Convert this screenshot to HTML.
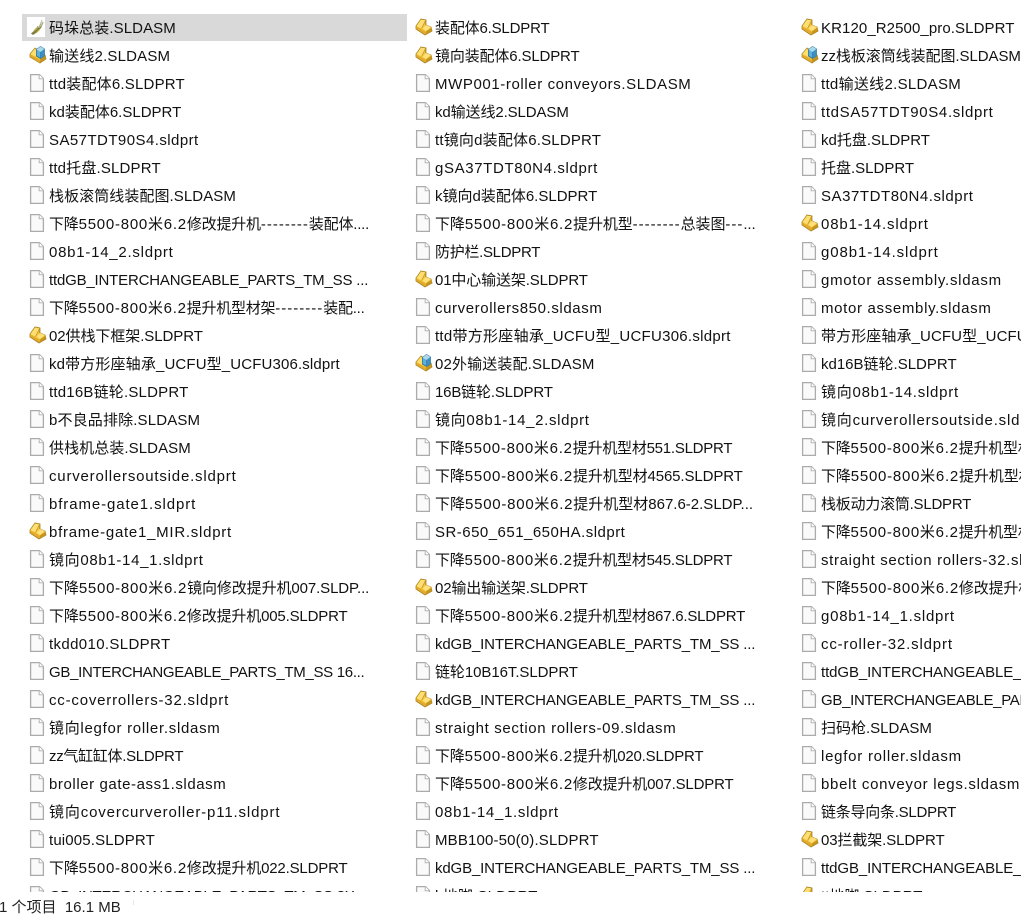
<!DOCTYPE html>
<html lang="zh">
<head>
<meta charset="utf-8">
<title>Files</title>
<style>
html,body{margin:0;padding:0;background:#fff}
body{width:1021px;height:905px;overflow:hidden;position:relative;font-family:"Liberation Sans","Noto Sans CJK SC",sans-serif;font-size:15px;color:#111}
#view{position:absolute;left:0;top:0;width:1021px;height:892px;overflow:hidden}
#sel{position:absolute;left:22px;top:14px;width:385px;height:27px;background:#d9d9d9}
.c{position:absolute;top:14px;width:386px}
.c div{height:28px;line-height:30px;padding-left:27px;white-space:nowrap;position:relative}
.c svg{position:absolute;left:7px;top:3px;width:18px;height:20px}
.c svg.w{left:5px}
i{font-style:normal;letter-spacing:.75px}
u{text-decoration:none;letter-spacing:1px}
#status{position:absolute;left:-1px;top:898px;font-size:15px;line-height:20px;white-space:pre;color:#222}
#rule{position:absolute;left:133px;top:900px;width:1px;height:5px;background:#e8e8e8}
</style>
</head>
<body>
<svg width="0" height="0" style="position:absolute">
<symbol id="d" viewBox="0 0 18 20"><path d="M1.6 1.6H10.5L14.4 5.5V18.4H1.6Z" fill="#fafafa" stroke="#ababab" stroke-width="1.3"/><path d="M10.2 1.6V5.8H14.4" fill="#fff" stroke="#b5b5b5"/></symbol>
<symbol id="p" viewBox="0 0 18 20"><path d="M1 9L6 2L11 3L11 8L16 10L17 14L10 18L1 12Z" fill="#f2c33c" stroke="#a5811f" stroke-width=".8"/><path d="M1.5 9L6 2.6L10.5 3.5L6.5 11.5Z" fill="#ffdf70"/><path d="M7.5 11.5L11 8L16 10L11 14Z" fill="#ffe07a"/><path d="M11 14.5L16.7 10.5L16.7 14L10.5 17.6Z" fill="#c6951f"/><path d="M1.3 9.5L10.5 14.8V17.6L1.3 11.8Z" fill="#e2aa2a"/><path d="M6.5 11.5L10.5 3.5V8" fill="none" stroke="#bd9226" stroke-width=".7"/></symbol>
<symbol id="a" viewBox="0 0 18 20"><path d="M1 9L6 3L11 6L16 10L17 14L11 18L1 12Z" fill="#f2c33c" stroke="#a5811f" stroke-width=".8"/><path d="M1.5 9L6 3.5L8 9L6.5 11.5Z" fill="#ffdf70"/><path d="M11 14.5L16.7 10.5V14L10.5 17.6Z" fill="#c6951f"/><path d="M1.3 9.5L10.5 14.8V17.6L1.3 11.8Z" fill="#e2aa2a"/><path d="M7.5 4.5L11.5 1.5L15.5 4V11L11.5 13.5L7.5 11Z" fill="#5cb0dc" stroke="#2f7099" stroke-width=".8"/><path d="M7.5 4.5L11.5 7L15.5 4L11.5 1.5Z" fill="#a9d8ef"/><path d="M11.5 7V13.5" stroke="#2f7099" stroke-width=".8"/><path d="M11.5 7L15.5 4V11L11.5 13.5Z" fill="#3f8fbe"/></symbol>
<symbol id="s" viewBox="0 0 18 20"><rect width="18" height="20" fill="#fff"/><path d="M4 16.5L8 13L13 9L14.5 10.5L9 16L6 18Z" fill="#7f7e40"/><path d="M9 13L11 9M12 11L14 6M14 10L16 5" fill="none" stroke="#a9a978" stroke-width="1.2"/><path d="M7 14L9.5 11M9 16L13 12" fill="none" stroke="#bdb341" stroke-width="1.1"/><path d="M13.5 7L15 3" stroke="#c5c5b4" stroke-width="1.2"/></symbol>
</svg>
<div id="view">
<div id="sel"></div>
<div class="c" style="left:22px">
<div style="letter-spacing:.09px"><svg class="w"><use href="#s"/></svg>码垛总装.SLDASM</div>
<div style="letter-spacing:.18px"><svg><use href="#a"/></svg>输送线2.SLDASM</div>
<div style="letter-spacing:.2px"><svg><use href="#d"/></svg>ttd装配体6.SLDPRT</div>
<div><svg><use href="#d"/></svg>kd装配体6.SLDPRT</div>
<div style="letter-spacing:.44px"><svg><use href="#d"/></svg>SA57TDT90S4.sldprt</div>
<div style="letter-spacing:.17px"><svg><use href="#d"/></svg>ttd托盘.SLDPRT</div>
<div style="letter-spacing:.07px"><svg><use href="#d"/></svg>栈板滚筒线装配图.SLDASM</div>
<div style="letter-spacing:-.2px"><svg><use href="#d"/></svg>下降<i>5500-800米6.2</i>修改提升机<u>--------</u>装配体....</div>
<div style="letter-spacing:.75px"><svg><use href="#d"/></svg>08b1-14_2.sldprt</div>
<div style="letter-spacing:-.19px"><svg><use href="#d"/></svg>ttdGB_INTERCHANGEABLE_PARTS_TM_SS ...</div>
<div style="letter-spacing:-.25px"><svg><use href="#d"/></svg>下降<i>5500-800米6.2</i>提升机型材架<u>--------</u>装配...</div>
<div style="letter-spacing:-.07px"><svg><use href="#p"/></svg>02供栈下框架.SLDPRT</div>
<div style="letter-spacing:.14px"><svg><use href="#d"/></svg>kd带方形座轴承_UCFU型_UCFU306.sldprt</div>
<div style="letter-spacing:.2px"><svg><use href="#d"/></svg>ttd16B链轮.SLDPRT</div>
<div style="letter-spacing:.15px"><svg><use href="#d"/></svg>b不良品排除.SLDASM</div>
<div style="letter-spacing:.08px"><svg><use href="#d"/></svg>供栈机总装.SLDASM</div>
<div style="letter-spacing:.8px"><svg><use href="#d"/></svg>curverollersoutside.sldprt</div>
<div style="letter-spacing:.9px"><svg><use href="#d"/></svg>bframe-gate1.sldprt</div>
<div style="letter-spacing:.74px"><svg><use href="#p"/></svg>bframe-gate1_MIR.sldprt</div>
<div style="letter-spacing:.67px"><svg><use href="#d"/></svg>镜向08b1-14_1.sldprt</div>
<div style="letter-spacing:-.1px"><svg><use href="#d"/></svg>下降<i>5500-800米6.2</i>镜向修改提升机007.SLDP...</div>
<div style="letter-spacing:-.17px"><svg><use href="#d"/></svg>下降<i>5500-800米6.2</i>修改提升机005.SLDPRT</div>
<div style="letter-spacing:.36px"><svg><use href="#d"/></svg>tkdd010.SLDPRT</div>
<div style="letter-spacing:-.3px"><svg><use href="#d"/></svg>GB_INTERCHANGEABLE_PARTS_TM_SS 16...</div>
<div style="letter-spacing:.8px"><svg><use href="#d"/></svg>cc-coverrollers-32.sldprt</div>
<div style="letter-spacing:.71px"><svg><use href="#d"/></svg>镜向legfor roller.sldasm</div>
<div style="letter-spacing:-.3px"><svg><use href="#d"/></svg>zz气缸缸体.SLDPRT</div>
<div style="letter-spacing:.58px"><svg><use href="#d"/></svg>broller gate-ass1.sldasm</div>
<div style="letter-spacing:.86px"><svg><use href="#d"/></svg>镜向covercurveroller-p11.sldprt</div>
<div style="letter-spacing:.15px"><svg><use href="#d"/></svg>tui005.SLDPRT</div>
<div style="letter-spacing:-.17px"><svg><use href="#d"/></svg>下降<i>5500-800米6.2</i>修改提升机022.SLDPRT</div>
<div style="letter-spacing:-.3px"><svg><use href="#d"/></svg>GB_INTERCHANGEABLE_PARTS_TM_SS 8X...</div>
</div>
<div class="c" style="left:408px">
<div style="letter-spacing:-.18px"><svg><use href="#p"/></svg>装配体6.SLDPRT</div>
<div style="letter-spacing:-.15px"><svg><use href="#p"/></svg>镜向装配体6.SLDPRT</div>
<div style="letter-spacing:.6px"><svg><use href="#d"/></svg>MWP001-roller conveyors.SLDASM</div>
<div style="letter-spacing:-.1px"><svg><use href="#d"/></svg>kd输送线2.SLDASM</div>
<div style="letter-spacing:.19px"><svg><use href="#d"/></svg>tt镜向d装配体6.SLDPRT</div>
<div style="letter-spacing:.63px"><svg><use href="#d"/></svg>gSA37TDT80N4.sldprt</div>
<div><svg><use href="#d"/></svg>k镜向d装配体6.SLDPRT</div>
<div style="letter-spacing:-.1px"><svg><use href="#d"/></svg>下降<i>5500-800米6.2</i>提升机型<u>--------</u>总装图<u>---</u>...</div>
<div style="letter-spacing:-.3px"><svg><use href="#d"/></svg>防护栏.SLDPRT</div>
<div style="letter-spacing:-.14px"><svg><use href="#p"/></svg>01中心输送架.SLDPRT</div>
<div style="letter-spacing:.6px"><svg><use href="#d"/></svg>curverollers850.sldasm</div>
<div style="letter-spacing:.27px"><svg><use href="#d"/></svg>ttd带方形座轴承_UCFU型_UCFU306.sldprt</div>
<div style="letter-spacing:.14px"><svg><use href="#a"/></svg>02外输送装配.SLDASM</div>
<div style="letter-spacing:-.17px"><svg><use href="#d"/></svg>16B链轮.SLDPRT</div>
<div style="letter-spacing:.67px"><svg><use href="#d"/></svg>镜向08b1-14_2.sldprt</div>
<div style="letter-spacing:-.24px"><svg><use href="#d"/></svg>下降<i>5500-800米6.2</i>提升机型材551.SLDPRT</div>
<div style="letter-spacing:-.11px"><svg><use href="#d"/></svg>下降<i>5500-800米6.2</i>提升机型材4565.SLDPRT</div>
<div><svg><use href="#d"/></svg>下降<i>5500-800米6.2</i>提升机型材867.6-2.SLDP...</div>
<div style="letter-spacing:.48px"><svg><use href="#d"/></svg>SR-650_651_650HA.sldprt</div>
<div style="letter-spacing:-.24px"><svg><use href="#d"/></svg>下降<i>5500-800米6.2</i>提升机型材545.SLDPRT</div>
<div style="letter-spacing:-.14px"><svg><use href="#p"/></svg>02输出输送架.SLDPRT</div>
<div style="letter-spacing:-.2px"><svg><use href="#d"/></svg>下降<i>5500-800米6.2</i>提升机型材867.6.SLDPRT</div>
<div style="letter-spacing:-.14px"><svg><use href="#d"/></svg>kdGB_INTERCHANGEABLE_PARTS_TM_SS ...</div>
<div style="letter-spacing:-.07px"><svg><use href="#d"/></svg>链轮10B16T.SLDPRT</div>
<div style="letter-spacing:-.14px"><svg><use href="#p"/></svg>kdGB_INTERCHANGEABLE_PARTS_TM_SS ...</div>
<div style="letter-spacing:.65px"><svg><use href="#d"/></svg>straight section rollers-09.sldasm</div>
<div style="letter-spacing:-.2px"><svg><use href="#d"/></svg>下降<i>5500-800米6.2</i>提升机020.SLDPRT</div>
<div style="letter-spacing:-.17px"><svg><use href="#d"/></svg>下降<i>5500-800米6.2</i>修改提升机007.SLDPRT</div>
<div style="letter-spacing:.7px"><svg><use href="#d"/></svg>08b1-14_1.sldprt</div>
<div style="letter-spacing:.16px"><svg><use href="#d"/></svg>MBB100-50(0).SLDPRT</div>
<div style="letter-spacing:-.14px"><svg><use href="#d"/></svg>kdGB_INTERCHANGEABLE_PARTS_TM_SS ...</div>
<div style="letter-spacing:.2px"><svg><use href="#d"/></svg>k地脚.SLDPRT</div>
</div>
<div class="c" style="left:794px">
<div style="letter-spacing:.09px"><svg><use href="#p"/></svg>KR120_R2500_pro.SLDPRT</div>
<div style="letter-spacing:-.06px"><svg><use href="#a"/></svg>zz栈板滚筒线装配图.SLDASM</div>
<div style="letter-spacing:.3px"><svg><use href="#d"/></svg>ttd输送线2.SLDASM</div>
<div style="letter-spacing:.67px"><svg><use href="#d"/></svg>ttdSA57TDT90S4.sldprt</div>
<div><svg><use href="#d"/></svg>kd托盘.SLDPRT</div>
<div><svg><use href="#d"/></svg>托盘.SLDPRT</div>
<div style="letter-spacing:.55px"><svg><use href="#d"/></svg>SA37TDT80N4.sldprt</div>
<div style="letter-spacing:.85px"><svg><use href="#p"/></svg>08b1-14.sldprt</div>
<div style="letter-spacing:.9px"><svg><use href="#d"/></svg>g08b1-14.sldprt</div>
<div style="letter-spacing:.73px"><svg><use href="#d"/></svg>gmotor assembly.sldasm</div>
<div style="letter-spacing:.67px"><svg><use href="#d"/></svg>motor assembly.sldasm</div>
<div style="letter-spacing:.1px"><svg><use href="#d"/></svg>带方形座轴承_UCFU型_UCFU306.sldprt</div>
<div><svg><use href="#d"/></svg>kd16B链轮.SLDPRT</div>
<div style="letter-spacing:.75px"><svg><use href="#d"/></svg>镜向08b1-14.sldprt</div>
<div style="letter-spacing:.8px"><svg><use href="#d"/></svg>镜向curverollersoutside.sldprt</div>
<div style="letter-spacing:-.24px"><svg><use href="#d"/></svg>下降<i>5500-800米6.2</i>提升机型材551.SLDPRT</div>
<div style="letter-spacing:-.11px"><svg><use href="#d"/></svg>下降<i>5500-800米6.2</i>提升机型材4565.SLDPRT</div>
<div style="letter-spacing:-.23px"><svg><use href="#d"/></svg>栈板动力滚筒.SLDPRT</div>
<div style="letter-spacing:-.24px"><svg><use href="#d"/></svg>下降<i>5500-800米6.2</i>提升机型材545.SLDPRT</div>
<div style="letter-spacing:.65px"><svg><use href="#d"/></svg>straight section rollers-32.sldprt</div>
<div style="letter-spacing:-.17px"><svg><use href="#d"/></svg>下降<i>5500-800米6.2</i>修改提升机007.SLDPRT</div>
<div style="letter-spacing:.76px"><svg><use href="#d"/></svg>g08b1-14_1.sldprt</div>
<div style="letter-spacing:.84px"><svg><use href="#d"/></svg>cc-roller-32.sldprt</div>
<div style="letter-spacing:-.1px"><svg><use href="#d"/></svg>ttdGB_INTERCHANGEABLE_PARTS_TM_SS ...</div>
<div style="letter-spacing:-.3px"><svg><use href="#d"/></svg>GB_INTERCHANGEABLE_PARTS_TM_SS 16...</div>
<div><svg><use href="#d"/></svg>扫码枪.SLDASM</div>
<div style="letter-spacing:.75px"><svg><use href="#d"/></svg>legfor roller.sldasm</div>
<div style="letter-spacing:.7px"><svg><use href="#d"/></svg>bbelt conveyor legs.sldasm</div>
<div style="letter-spacing:-.25px"><svg><use href="#d"/></svg>链条导向条.SLDPRT</div>
<div style="letter-spacing:-.1px"><svg><use href="#p"/></svg>03拦截架.SLDPRT</div>
<div style="letter-spacing:-.1px"><svg><use href="#d"/></svg>ttdGB_INTERCHANGEABLE_PARTS_TM_SS ...</div>
<div><svg><use href="#p"/></svg>tt地脚.SLDPRT</div>
</div>
</div>
<div id="status">1 个项目  16.1 MB</div>
<div id="rule"></div>
</body>
</html>
